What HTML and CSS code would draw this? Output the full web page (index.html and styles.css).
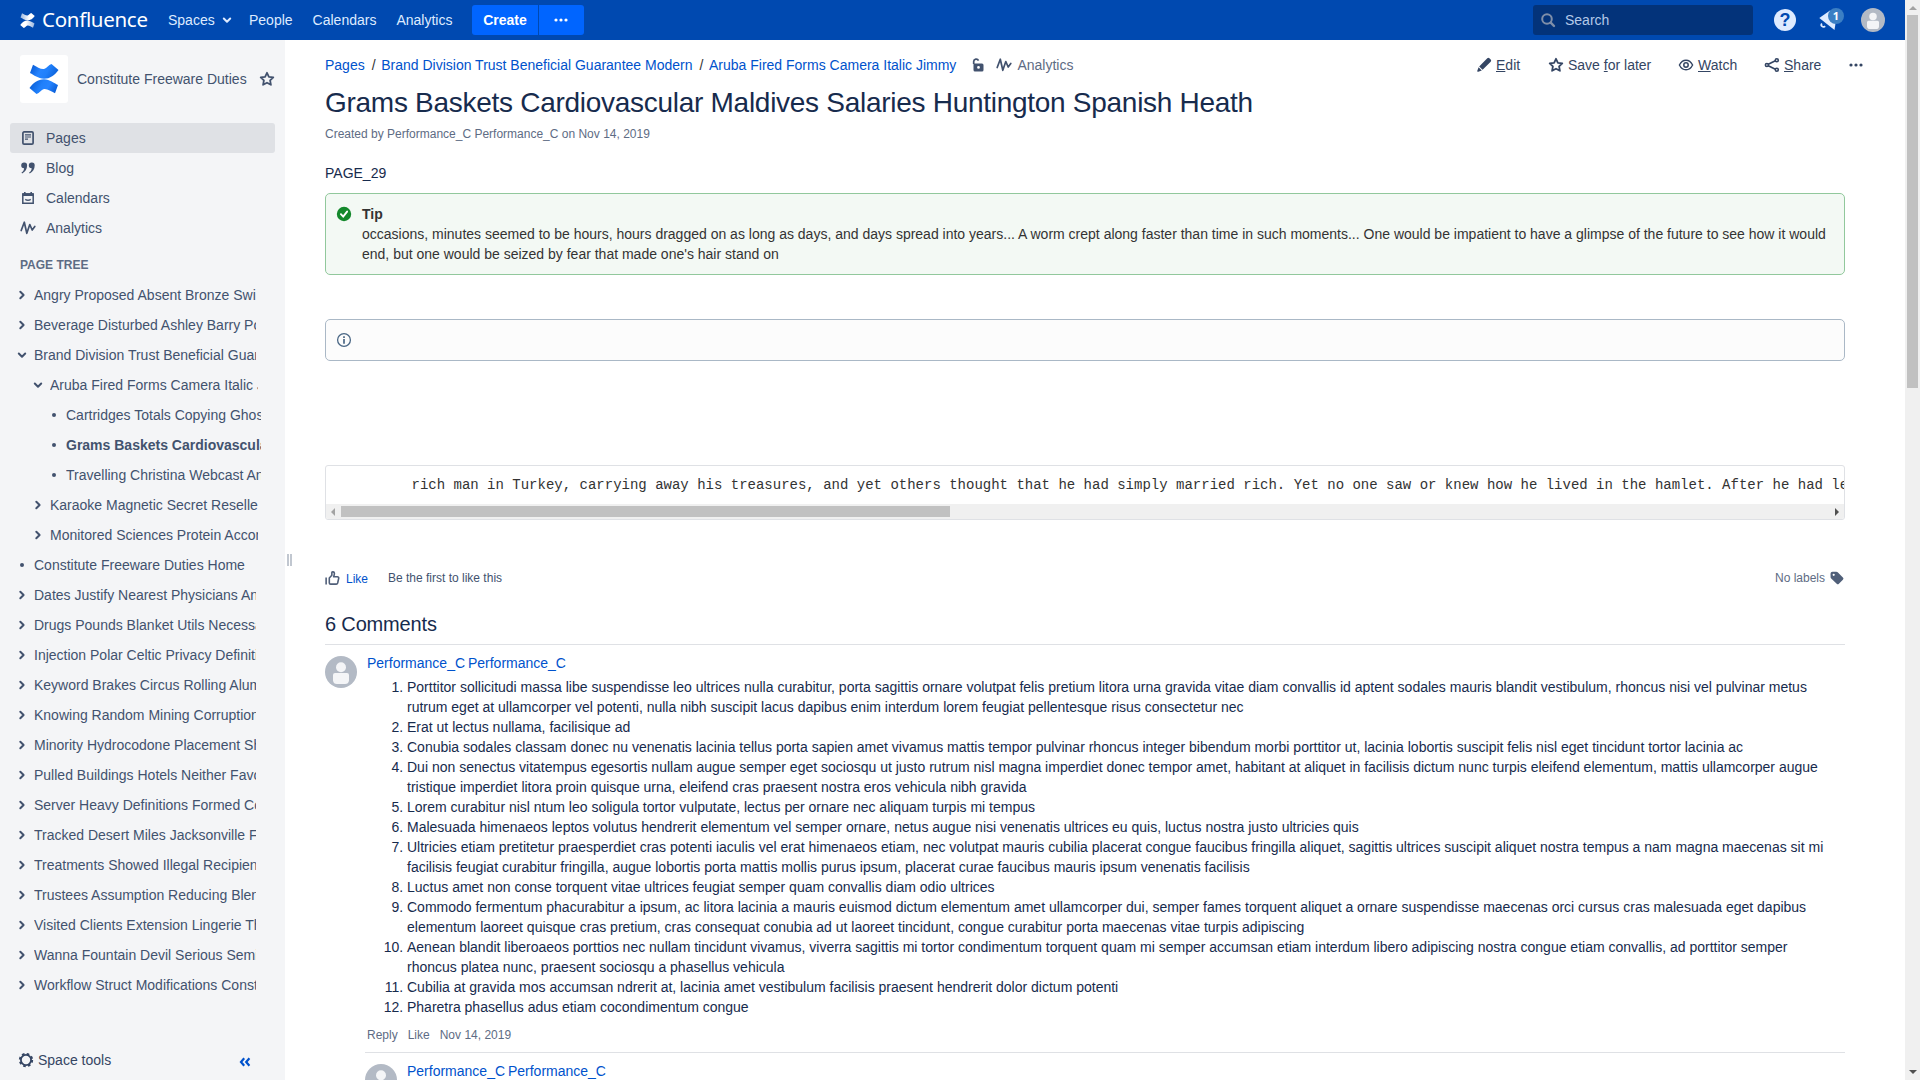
FILE: index.html
```
<!DOCTYPE html>
<html lang="en">
<head>
<meta charset="utf-8">
<title>Grams Baskets Cardiovascular Maldives Salaries Huntington Spanish Heath - Confluence</title>
<link rel="stylesheet" href="styles.css">
</head>
<body>
<svg class="defs" aria-hidden="true">
  <symbol id="right" viewBox="0 0 16 16"><path d="M6.3 4.7 9.6 8l-3.3 3.3" fill="none" stroke="currentColor" stroke-width="2" stroke-linecap="round" stroke-linejoin="round"/></symbol>
  <symbol id="down" viewBox="0 0 16 16"><path d="M4.8 6.5 8 9.7l3.2-3.2" fill="none" stroke="currentColor" stroke-width="2" stroke-linecap="round" stroke-linejoin="round"/></symbol>
  <symbol id="dot" viewBox="0 0 16 16"><circle cx="8" cy="8" r="2" fill="currentColor"/></symbol>
  <symbol id="star" viewBox="0 0 16 16"><path d="m8 1.8 1.9 4 4.4.6-3.2 3 .8 4.4L8 11.700l-3.900 2.100.8-4.400-3.200-3 4.400-.6z" fill="none" stroke="currentColor" stroke-width="1.800" stroke-linejoin="round"/></symbol>
  <symbol id="wave" viewBox="0 0 16 16"><path d="M1.200 10.500 4.300 2.200 6.800 13.300 9.800 4.500 12.200 10 14.800 6.500" fill="none" stroke="currentColor" stroke-width="1.700" stroke-linecap="round" stroke-linejoin="round"/></symbol>
  <symbol id="more" viewBox="0 0 16 16"><g fill="currentColor"><circle cx="3" cy="8" r="1.6"/><circle cx="8" cy="8" r="1.6"/><circle cx="13" cy="8" r="1.6"/></g></symbol>
  <symbol id="avatar" viewBox="0 0 32 32"><circle cx="16" cy="16" r="16" fill="#b3bac5"/><circle cx="16" cy="11.3" r="5" fill="#f4f5f7"/><path d="M8 19a2 2 0 0 1 2-2h12a2 2 0 0 1 2 2v5.5a4 4 0 0 1-4 3.5h-8a4 4 0 0 1-4-3.5z" fill="#f4f5f7"/></symbol>
</svg>
<header class="header">
  <a class="brand"><svg class="brand-mark" viewBox="0 0 30 30" preserveAspectRatio="none"><defs><linearGradient id="w" x1="0" x2="1"><stop offset="0" stop-color="#fff" stop-opacity=".6"/><stop offset=".6" stop-color="#fff"/></linearGradient></defs><path id="ws" fill="url(#w)" d="M4 .7C8 3 12 5.500 15 5 18 4 19.500 1 22.500 0L29.500 6C26 11 21 14.800 15 14.800 9 14.500 5 11 1 9z"/><use href="#ws" transform="rotate(180 15 15)"/></svg><span class="brand-name">Confluence</span></a>
  <nav class="menu">
    <a class="spaces">Spaces <svg class="icon"><use href="#down"/></svg></a><a>People</a><a>Calendars</a><a>Analytics</a>
  </nav>
  <div class="create"><button>Create</button><button class="create-more"><svg class="icon"><use href="#more"/></svg></button></div>
  <div class="search"><svg class="icon" viewBox="0 0 16 16"><circle cx="7" cy="7" r="4.800" fill="none" stroke="currentColor" stroke-width="2"/><path d="m10.700 10.700 3.300 3.300" stroke="currentColor" stroke-width="2.400" stroke-linecap="round"/></svg><span>Search</span></div>
  <span class="help">?</span>
  <div class="notices"><svg viewBox="0 0 28 24"><path d="M1.300 10 12 2.500l6 9.500-1.500 10z" fill="#deebff"/><path d="M3.800 15.500a1.900 1.900 0 1 0 3.300 2.600" fill="none" stroke="#deebff" stroke-width="1.700"/></svg><b>1</b></div>
  <svg class="me"><use href="#avatar"/></svg>
</header>
<div class="body">
  <aside class="sidebar">
    <div class="space">
      <div class="space-logo"><svg viewBox="0 0 30 30"><defs><linearGradient id="g" x1="0" x2="1" y1="0" y2=".3"><stop offset="0" stop-color="#0052cc"/><stop offset=".45" stop-color="#2684ff"/><stop offset=".7" stop-color="#2080fb"/><stop offset="1" stop-color="#0f66de"/></linearGradient></defs><path id="sl" fill="url(#g)" d="M4 .7C8 3 12 5.500 15 5 18 4 19.500 1 22.500 0L29.500 6C26 11 21 14.800 15 14.800 9 14.500 5 11 1 9z"/><use href="#sl" transform="rotate(180 15 15)"/></svg></div>
      <a class="space-name">Constitute Freeware Duties</a>
      <svg class="icon"><use href="#star"/></svg>
    </div>
    <nav class="side-nav">
      <a class="active"><svg class="icon" viewBox="0 0 16 16"><rect x="2.900" y="1.900" width="10.200" height="12.200" rx="1.200" fill="none" stroke="currentColor" stroke-width="1.700"/><path d="M5 4.800h6M5 7h6M5 9.200h3" stroke="currentColor" stroke-width="1.200"/></svg>Pages</a>
      <a><svg class="icon" viewBox="0 0 16 16" fill="currentColor"><path id="q" d="M1.200 5.300a2.900 2.900 0 1 1 5.900.3c0 3.400-1.800 6.300-5 7.900l-.6-.9c1.700-1.200 2.500-2.500 2.600-4.300a2.900 2.900 0 0 1-2.900-3z"/><use href="#q" x="7.600"/></svg>Blog</a>
      <a><svg class="icon" viewBox="0 0 16 16"><path d="M2.800 4h10.400v9.200H2.800zM5.300 9.300q2.700 2 5.400 0" fill="none" stroke="currentColor" stroke-width="1.500"/><path d="M2.500 3.200h11v2.700h-11zM4 2h1.600v2H4zM10.400 2H12v2h-1.600z" fill="currentColor"/></svg>Calendars</a>
      <a><svg class="icon"><use href="#wave"/></svg>Analytics</a>
    </nav>
    <h5>PAGE TREE</h5>
    <ul class="tree">
      <li><svg class="icon"><use href="#right"/></svg><span>Angry Proposed Absent Bronze Swimming</span></li>
      <li><svg class="icon"><use href="#right"/></svg><span>Beverage Disturbed Ashley Barry Posing</span></li>
      <li><svg class="icon"><use href="#down"/></svg><span>Brand Division Trust Beneficial Guarantee Modern</span></li>
      <li class="l2"><svg class="icon"><use href="#down"/></svg><span>Aruba Fired Forms Camera Italic Jimmy</span></li>
      <li class="l3"><svg class="icon"><use href="#dot"/></svg><span>Cartridges Totals Copying Ghost</span></li>
      <li class="l3"><svg class="icon"><use href="#dot"/></svg><span><b>Grams Baskets Cardiovascular Maldives</b></span></li>
      <li class="l3"><svg class="icon"><use href="#dot"/></svg><span>Travelling Christina Webcast Angle</span></li>
      <li class="l2"><svg class="icon"><use href="#right"/></svg><span>Karaoke Magnetic Secret Reseller</span></li>
      <li class="l2"><svg class="icon"><use href="#right"/></svg><span>Monitored Sciences Protein Accommodation</span></li>
      <li><svg class="icon"><use href="#dot"/></svg><span>Constitute Freeware Duties Home</span></li>
      <li><svg class="icon"><use href="#right"/></svg><span>Dates Justify Nearest Physicians Angle</span></li>
      <li><svg class="icon"><use href="#right"/></svg><span>Drugs Pounds Blanket Utils Necessary</span></li>
      <li><svg class="icon"><use href="#right"/></svg><span>Injection Polar Celtic Privacy Definitions</span></li>
      <li><svg class="icon"><use href="#right"/></svg><span>Keyword Brakes Circus Rolling Aluminum</span></li>
      <li><svg class="icon"><use href="#right"/></svg><span>Knowing Random Mining Corruption</span></li>
      <li><svg class="icon"><use href="#right"/></svg><span>Minority Hydrocodone Placement Showed</span></li>
      <li><svg class="icon"><use href="#right"/></svg><span>Pulled Buildings Hotels Neither Favors</span></li>
      <li><svg class="icon"><use href="#right"/></svg><span>Server Heavy Definitions Formed Cost</span></li>
      <li><svg class="icon"><use href="#right"/></svg><span>Tracked Desert Miles Jacksonville Feet</span></li>
      <li><svg class="icon"><use href="#right"/></svg><span>Treatments Showed Illegal Recipients</span></li>
      <li><svg class="icon"><use href="#right"/></svg><span>Trustees Assumption Reducing Blend</span></li>
      <li><svg class="icon"><use href="#right"/></svg><span>Visited Clients Extension Lingerie Thick</span></li>
      <li><svg class="icon"><use href="#right"/></svg><span>Wanna Fountain Devil Serious Semi</span></li>
      <li><svg class="icon"><use href="#right"/></svg><span>Workflow Struct Modifications Constitute</span></li>
    </ul>
    <div class="side-foot">
      <svg class="icon" viewBox="0 0 16 16" fill="none" stroke="currentColor"><circle cx="8" cy="8" r="5.100" stroke-width="1.800"/><circle cx="8" cy="8" r="6.200" stroke-width="1.900" stroke-dasharray="2.600 2.270"/></svg>
      <span>Space tools</span>
      <svg class="collapse" viewBox="0 0 12 10"><path d="M5.200 1.300 2 5l3.200 3.700M10.400 1.300 7.200 5l3.200 3.700" fill="none" stroke="currentColor" stroke-width="2.200"/></svg>
    </div>
  </aside>
  <div class="splitter"><i></i></div>
  <main class="content">
    <div class="bar">
      <div class="crumbs"><a>Pages</a><i>/</i><a>Brand Division Trust Beneficial Guarantee Modern</a><i>/</i><a>Aruba Fired Forms Camera Italic Jimmy</a>
        <svg class="icon lock" viewBox="0 0 16 16"><path d="M3.700 7V4.400a2.500 2.500 0 0 1 4.800-.8" fill="none" stroke="currentColor" stroke-width="1.700"/><path fill="currentColor" fill-rule="evenodd" d="M5.500 6.500h6.500a1.500 1.500 0 0 1 1.500 1.500v5a1.500 1.500 0 0 1-1.500 1.500H5A1.500 1.500 0 0 1 3.500 13V6.500zM8.500 9a1.400 1.400 0 1 0 0 2.800 1.400 1.400 0 0 0 0-2.800z"/></svg>
        <svg class="icon"><use href="#wave"/></svg><span class="muted">Analytics</span></div>
      <div class="tools">
        <a class="edit"><svg class="icon" viewBox="0 0 16 16" fill="currentColor"><path d="m10.300 2.300 1-1a1.500 1.500 0 0 1 2.100 0l1.300 1.300a1.500 1.500 0 0 1 0 2.100L6.600 12.800 3.200 9.400zM2.600 10.200l3.200 3.200-3.500 1.300c-.7.200-1.200-.3-1-1z"/></svg><span><u>E</u>dit</span></a>
        <a class="save"><svg class="icon"><use href="#star"/></svg><span>Save <u>f</u>or later</span></a>
        <a class="watch"><svg class="icon" viewBox="0 0 16 16" fill="none" stroke="currentColor"><path d="M1.400 8C3 4.800 5.300 3.200 8 3.200S13 4.800 14.600 8C13 11.200 10.700 12.800 8 12.800S3 11.200 1.400 8z" stroke-width="1.400"/><circle cx="8" cy="8" r="2.200" stroke-width="1.500"/></svg><span><u>W</u>atch</span></a>
        <a class="share"><svg class="icon" viewBox="0 0 16 16" fill="none" stroke="currentColor" stroke-width="1.600"><circle cx="2.900" cy="8" r="1.500"/><circle cx="12.800" cy="3.200" r="1.500"/><circle cx="12.800" cy="12.800" r="1.500"/><path d="m4.300 7.300 7.100-3.500M4.300 8.700l7.100 3.500"/></svg><span><u>S</u>hare</span></a>
        <svg class="icon"><use href="#more"/></svg>
      </div>
    </div>
    <h1>Grams Baskets Cardiovascular Maldives Salaries Huntington Spanish Heath</h1>
    <p class="meta">Created by Performance_C Performance_C on Nov 14, 2019</p>
    <p class="text">PAGE_29</p>
    <section class="panel tip">
      <svg class="icon" viewBox="0 0 16 16"><circle cx="8" cy="8" r="7.200" fill="#14892c"/><path d="m4.900 8.200 2.300 2.400 3.900-5" fill="none" stroke="#fff" stroke-width="1.900" stroke-linecap="round"/></svg>
      <div><b>Tip</b><p>occasions, minutes seemed to be hours, hours dragged on as long as days, and days spread into years... A worm crept along faster than time in such moments... One would be impatient to have a glimpse of the future to see how it would end, but one would be seized by fear that made one's hair stand on</p></div>
    </section>
    <section class="panel info">
      <svg class="icon" viewBox="0 0 16 16"><circle cx="8" cy="8" r="6.400" fill="none" stroke="#4a6785" stroke-width="1.300"/><path d="M8 7v4.700M8 4.200v1.700" stroke="#4a6785" stroke-width="1.700"/></svg>
    </section>
    <section class="code">
      <pre>rich man in Turkey, carrying away his treasures, and yet others thought that he had simply married rich. Yet no one saw or knew how he lived in the hamlet. After he had left</pre>
      <div class="hscroll"><i class="left"></i><i class="thumb"></i><i class="end"></i></div>
    </section>
    <div class="likes">
      <svg class="thumb-up" viewBox="0 0 16 16" fill="none" stroke="#505f79" stroke-width="1.700" stroke-linejoin="round"><path d="M1.200 6.800v7.700M4.600 7.400 7.300 4.500V1.800c0-1.300 2.500-1.200 2.700.5.100 1.500-.3 2.400-.8 3.800h4c1 0 1.600.8 1.400 1.700l-1.100 5c-.2.800-.7 1.200-1.500 1.200H6c-.8 0-1.400-.5-1.400-1.300z"/></svg>
      <a>Like</a><span>Be the first to like this</span>
      <span class="labels">No labels</span>
      <svg class="icon" viewBox="0 0 16 16"><path fill="#505f79" fill-rule="evenodd" d="M1.500 3.700A2 2 0 0 1 3.500 1.700h3.800c.6 0 1 .2 1.400.6l5.200 5.200a1.500 1.500 0 0 1 0 2.200l-4 4a1.500 1.500 0 0 1-2.200 0L2.200 8.600a2 2 0 0 1-.6-1.400zM4.700 3.700a1.100 1.100 0 1 0 0 2.200 1.100 1.100 0 0 0 0-2.200z"/></svg>
    </div>
    <h2>6 Comments</h2>
    <article class="comment">
      <svg class="avatar"><use href="#avatar"/></svg>
      <div class="comment-body">
        <a>Performance_C Performance_C</a>
        <ol>
          <li>Porttitor sollicitudi massa libe suspendisse leo ultrices nulla curabitur, porta sagittis ornare volutpat felis pretium litora urna gravida vitae diam convallis id aptent sodales mauris blandit vestibulum, rhoncus nisi vel pulvinar metus rutrum eget at ullamcorper vel potenti, nulla nibh suscipit lacus dapibus enim interdum lorem feugiat pellentesque risus consectetur nec</li>
          <li>Erat ut lectus nullama, facilisique ad</li>
          <li>Conubia sodales classam donec nu venenatis lacinia tellus porta sapien amet vivamus mattis tempor pulvinar rhoncus integer bibendum morbi porttitor ut, lacinia lobortis suscipit felis nisl eget tincidunt tortor lacinia ac</li>
          <li>Dui non senectus vitatempus egesortis nullam augue semper eget sociosqu ut justo rutrum nisl magna imperdiet donec tempor amet, habitant at aliquet in facilisis dictum nunc turpis eleifend elementum, mattis ullamcorper augue tristique imperdiet litora proin quisque urna, eleifend cras praesent nostra eros vehicula nibh gravida</li>
          <li>Lorem curabitur nisl ntum leo soligula tortor vulputate, lectus per ornare nec aliquam turpis mi tempus</li>
          <li>Malesuada himenaeos leptos volutus hendrerit elementum vel semper ornare, netus augue nisi venenatis ultrices eu quis, luctus nostra justo ultricies quis</li>
          <li>Ultricies etiam pretitetur praesperdiet cras potenti iaculis vel erat himenaeos etiam, nec volutpat mauris cubilia placerat congue faucibus fringilla aliquet, sagittis ultrices suscipit aliquet nostra tempus a nam magna maecenas sit mi facilisis feugiat curabitur fringilla, augue lobortis porta mattis mollis purus ipsum, placerat curae faucibus mauris ipsum venenatis facilisis</li>
          <li>Luctus amet non conse torquent vitae ultrices feugiat semper quam convallis diam odio ultrices</li>
          <li>Commodo fermentum phacurabitur a ipsum, ac litora lacinia a mauris euismod dictum elementum amet ullamcorper dui, semper fames torquent aliquet a ornare suspendisse maecenas orci cursus cras malesuada eget dapibus elementum laoreet quisque cras pretium, cras consequat conubia ad ut laoreet tincidunt, congue curabitur porta maecenas vitae turpis adipiscing</li>
          <li>Aenean blandit liberoaeos porttios nec nullam tincidunt vivamus, viverra sagittis mi tortor condimentum torquent quam mi semper accumsan etiam interdum libero adipiscing nostra congue etiam convallis, ad porttitor semper rhoncus platea nunc, praesent sociosqu a phasellus vehicula</li>
          <li>Cubilia at gravida mos accumsan ndrerit at, lacinia amet vestibulum facilisis praesent hendrerit dolor dictum potenti</li>
          <li>Pharetra phasellus adus etiam cocondimentum congue</li>
        </ol>
        <div class="actions"><span>Reply</span><span>Like</span><span>Nov 14, 2019</span></div>
      </div>
    </article>
    <article class="comment reply">
      <svg class="avatar"><use href="#avatar"/></svg>
      <div class="comment-body"><a>Performance_C Performance_C</a></div>
    </article>
  </main>
</div>
<div class="vscroll"><i class="up"></i><i class="grip"></i><i class="dn"></i></div>
</body>
</html>
```
FILE: styles.css
```
* { box-sizing: border-box; }
body { margin: 0; height: 1080px; overflow: hidden; background: #fff; color: #172b4d; font: 14px/20px "Liberation Sans", Arial, sans-serif; display: grid; grid-template: 40px 1040px / 1905px 15px; }
p, h1, h2, h5, ul, ol, pre { margin: 0; padding: 0; }
svg { display: block; flex: none; }
a { color: #0052cc; }
.defs { position: absolute; width: 0; height: 0; }
.icon { width: 16px; height: 16px; flex: none; }

.header { grid-area: 1 / 1; background: #0049b0; display: flex; align-items: center; padding: 0 20px; color: #deebff; }
.brand { display: flex; align-items: center; width: 148px; color: #fff; }
.brand-mark { width: 15px; height: 15px; margin-right: 7px; }
.brand-name { font: 20.5px/24px "Noto Sans", sans-serif; letter-spacing: -.3px; padding-bottom: 2px; }
.menu { display: flex; width: 304px; }
.menu a { color: #deebff; margin-right: 20px; white-space: nowrap; }
.menu .spaces { display: flex; align-items: center; width: 61px; gap: 4px; }
.create { display: flex; gap: 1px; }
.create button { border: 0; width: 66px; height: 30px; padding: 0; background: #0065ff; color: #fff; font: bold 14px/20px "Liberation Sans", Arial, sans-serif; border-radius: 3px 0 0 3px; }
.create .create-more { width: 45px; border-radius: 0 3px 3px 0; display: grid; place-items: center; padding-right: 2px; }
.search { margin-left: auto; width: 220px; height: 30px; border-radius: 3px; background: #03337a; display: flex; align-items: center; padding-left: 7px; gap: 9px; color: #b3c9e8; }
.search .icon { color: #7f8fa9; }
.help { width: 22px; height: 22px; border-radius: 50%; background: #deebff; color: #0049b0; font: bold 18px/22px "Liberation Sans", Arial, sans-serif; text-align: center; margin-left: 21px; }
.notices { position: relative; width: 28px; height: 24px; margin-left: 22px; }
.notices svg { width: 28px; height: 24px; }
.notices b { position: absolute; left: 10px; top: 0; width: 16px; height: 16px; border-radius: 50%; background: #3b7fc4; color: #fff; font: bold 11px/16px "Noto Sans", sans-serif; text-align: center; }
.me { width: 24px; height: 24px; margin-left: 15px; }

.body { grid-area: 2 / 1; display: grid; grid-template-columns: 285px 40px 1540px; min-height: 0; overflow: hidden; }
.sidebar { background: #f4f5f7; color: #42526e; display: flex; flex-direction: column; overflow: hidden; height: 1040px; }
.space { display: flex; align-items: center; height: 83px; padding: 5px 0 10px 20px; }
.space-logo { width: 48px; height: 48px; border-radius: 3px; background: #fff; display: grid; place-items: center; margin-right: 9px; }
.space-logo svg { width: 30px; height: 30px; }
.space-name { color: #42526e; width: 182px; white-space: nowrap; }
.side-nav { padding: 0 10px; display: grid; grid-auto-rows: 30px; }
.side-nav a { display: flex; align-items: center; gap: 10px; padding-left: 10px; color: #42526e; border-radius: 3px; }
.side-nav .active { background: #dfe1e5; }
h5 { font-size: 12px; line-height: 20px; color: #5e6c84; padding: 12px 0 5px 20px; }
.tree { list-style: none; }
.tree li { display: flex; align-items: center; height: 30px; padding-left: 14px; gap: 4px; }
.tree span { width: 222px; overflow: hidden; white-space: nowrap; }
.tree .l2 { padding-left: 30px; }
.tree .l2 span { width: 208px; }
.tree .l3 { padding-left: 46px; }
.tree .l3 span { width: 195px; }
.side-foot { margin-top: auto; height: 40px; display: flex; align-items: center; padding-left: 18px; gap: 4px; color: #344563; }
.side-foot span { width: 197px; }
.collapse { width: 12px; height: 10px; color: #0052cc; margin-top: 3px; }
.splitter { padding: 514px 0 0 2px; }
.splitter i { display: block; width: 5px; height: 12px; border: solid #c1c7d0; border-width: 0 2px; }

.content { display: flex; flex-direction: column; }
.content > * { width: 1520px; flex: none; }
.content .bar { display: flex; justify-content: space-between; width: 1539px; height: 20px; margin-top: 15px; white-space: nowrap; }
.crumbs, .tools, .tools a { display: flex; align-items: center; }
.crumbs i { font-style: normal; color: #333; width: 16.500px; padding-left: 7px; }
.crumbs .icon { color: #42526e; margin-right: 5px; }
.crumbs .lock { margin: 0 10px 0 14px; }
.muted { color: #5e6c84; }
.tools, .tools a { color: #344563; }
.tools a { gap: 4px; }
.edit { width: 72px; }
.save { width: 130px; }
.watch { width: 86px; }
.share { width: 84px; }
h1 { font-size: 28px; font-weight: 400; line-height: 32px; letter-spacing: -.28px; margin-top: 12px; white-space: nowrap; }
.meta { font-size: 12px; color: #5e6c84; margin-top: 5px; }
.text { margin-top: 19px; }
.panel { border: 1px solid #91c89c; border-radius: 5px; background: #f3f9f4; padding: 10px; display: flex; gap: 10px; color: #333; margin-top: 10px; }
.panel .icon { margin-top: 2px; }
.info { height: 42px; margin-top: 44px; border-color: #aab8c6; background: #fcfcfc; }
.code { margin-top: 104px; height: 55px; border: 1px solid #dfe1e5; border-radius: 3px; overflow: hidden; color: #333; }
.code pre { height: 38px; padding: 9px 0 0 85.500px; font: 14px/20px "Liberation Mono", monospace; overflow: hidden; }
.hscroll { height: 15px; background: #f0f0f0; display: flex; align-items: center; padding: 0 5px; }
.left { border: solid transparent; border-width: 4px 4px 4px 0; border-right-color: #a3a3a3; margin-right: 6px; }
.thumb { width: 609px; height: 11px; background: #c1c1c1; }
.end { border: solid transparent; border-width: 4px 0 4px 4px; border-left-color: #505050; margin-left: auto; }
.likes { display: flex; align-items: center; height: 20px; margin-top: 48px; font-size: 12px; color: #42526e; }
.thumb-up { width: 15px; height: 15px; margin-right: 6px; }
.likes a { width: 42px; padding-top: 2px; }
.labels { margin-left: auto; color: #5e6c84; margin-right: 4px; }
h2 { font-size: 20px; font-weight: 400; line-height: 24px; letter-spacing: -.16px; margin-top: 24px; height: 33px; border-bottom: 1px solid #dfe1e5; }
.comment { display: flex; gap: 10px; padding-top: 11px; }
.avatar { width: 32px; height: 32px; }
.comment-body { flex: 1; margin-top: -3px; }
.comment-body > a { word-spacing: -1px; }
.comment-body ol { padding: 0 10px 0 40px; margin-top: 4px; }
.actions { display: flex; gap: 10px; margin-top: 8px; font-size: 12px; color: #5e6c84; }
.content .reply { width: 1480px; margin: 7px 0 0 40px; border-top: 1px solid #dfe1e5; }

.vscroll { grid-area: 1 / 2 / 3 / 3; background: #f0f0f0; display: flex; flex-direction: column; align-items: center; }
.up { border: solid transparent; border-width: 0 4px 4px; border-bottom-color: #a3a3a3; margin: 6px 0 5px; }
.grip { width: 11px; height: 373px; background: #c1c1c1; }
.dn { border: solid transparent; border-width: 4px 4px 0; border-top-color: #505050; margin: auto 0 6px; }
```
